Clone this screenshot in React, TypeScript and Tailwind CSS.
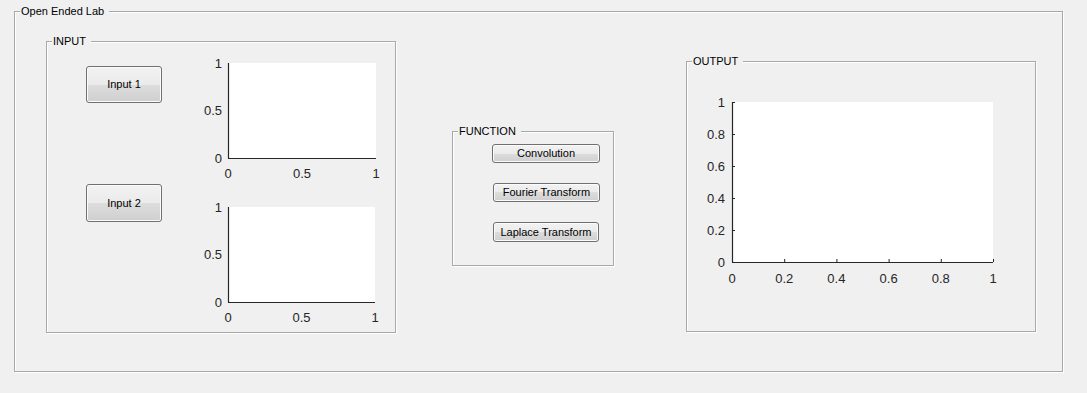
import React from 'react';

const font = { fontFamily: '"Liberation Sans", Arial, sans-serif' };

// etched group box like a MATLAB uipanel
function Panel({ title, className, children }: { title: string; className?: string; children?: React.ReactNode }) {
  return (
    <div
      className={`relative shrink-0 border border-[#a8a8a8] shadow-[1px_1px_0_#ffffff,inset_1px_1px_0_#ffffff] ${className ?? ''}`}
    >
      <span className="absolute -top-[7px] left-[5px] bg-[#f0f0f0] pl-[1px] pr-[5px] text-[11px] leading-[13px] text-black">
        {title}
      </span>
      {children}
    </div>
  );
}

function PushButton({ label, className }: { label: string; className?: string }) {
  return (
    <button
      className={`flex items-center justify-center rounded-[3px] border border-[#707070] bg-[linear-gradient(#f2f2f2_0%,#ebebeb_50%,#dddddd_50%,#cfcfcf_100%)] text-[11px] leading-none text-black shadow-[inset_0_0_0_1px_#fbfbfb] ${className ?? ''}`}
    >
      {label}
    </button>
  );
}

type AxesProps = {
  w: number;
  h: number;
  ticks: string[];
  ml: number;
  gap: number;
  labelDy: number;
  showTicks?: boolean;
};

// plain MATLAB axes: white box, left and bottom rulers, tick labels
function Axes({ w, h, ticks, ml, gap, labelDy, showTicks }: AxesProps) {
  const mt = 8;
  const mb = 26;
  const mr = 10;
  const n = ticks.length - 1;
  return (
    <svg width={ml + w + mr} height={mt + h + mb} className="block" style={font}>
      <rect x={ml} y={mt} width={w} height={h} fill="#ffffff" />
      <line x1={ml + 0.5} y1={mt} x2={ml + 0.5} y2={mt + h + 0.5} stroke="#262626" strokeWidth={1.2} />
      <line x1={ml} y1={mt + h + 0.5} x2={ml + w} y2={mt + h + 0.5} stroke="#262626" strokeWidth={1.2} />
      {ticks.map((t, i) => {
        const x = ml + (w * i) / n;
        const y = mt + h - (h * i) / n;
        return (
          <g key={t + i}>
            {showTicks && (
              <>
                <line x1={x + 0.5} y1={mt + h} x2={x + 0.5} y2={mt + h - 3} stroke="#262626" />
                <line x1={ml} y1={y + 0.5} x2={ml + 3} y2={y + 0.5} stroke="#262626" />
              </>
            )}
            <text x={ml - gap} y={y} textAnchor="end" dominantBaseline="central" fontSize={13} fill="#262626">
              {t}
            </text>
            <text x={x} y={mt + h + labelDy} textAnchor="middle" dominantBaseline="central" fontSize={13} fill="#262626">
              {t}
            </text>
          </g>
        );
      })}
    </svg>
  );
}

export default function App() {
  return (
    <div className="h-[393px] w-[1087px] overflow-hidden bg-[#f0f0f0] pl-[14px] pt-[11px]" style={font}>
      <Panel title="Open Ended Lab" className="h-[361px] w-[1049px]">
        <div className="flex items-start pl-[31px] pt-[29px]">
          {/* INPUT */}
          <Panel title="INPUT" className="h-[292px] w-[350px]">
            <div className="flex">
              <div className="flex flex-col gap-[81px] pl-[39px] pt-[24px]">
                <PushButton label="Input 1" className="h-[37px] w-[76px] text-[10.5px]" />
                <PushButton label="Input 2" className="h-[38px] w-[76px] text-[10.5px]" />
              </div>
              <div className="ml-[36px] flex flex-col gap-[15px] pt-[13px]">
                <Axes w={148} h={95} ticks={['0', '0.5', '1']} ml={30} gap={6} labelDy={15} />
                <Axes w={147} h={95} ticks={['0', '0.5', '1']} ml={30} gap={6} labelDy={15} />
              </div>
            </div>
          </Panel>

          {/* FUNCTION */}
          <Panel title="FUNCTION" className="ml-[56px] mt-[90px] h-[135px] w-[162px]">
            <div className="flex flex-col items-start gap-[20px] pl-[39px] pt-[12px]">
              <PushButton label="Convolution" className="h-[19px] w-[108px]" />
              <PushButton label="Fourier Transform" className="ml-[1px] h-[19px] w-[107px]" />
              <PushButton label="Laplace Transform" className="ml-[1px] h-[20px] w-[106px]" />
            </div>
          </Panel>

          {/* OUTPUT */}
          <Panel title="OUTPUT" className="ml-[72px] mt-[20px] h-[271px] w-[350px]">
            <div className="pl-[9px] pt-[32px]">
              <Axes
                w={261}
                h={160}
                ticks={['0', '0.2', '0.4', '0.6', '0.8', '1']}
                ml={36}
                gap={7}
                labelDy={16}
                showTicks
              />
            </div>
          </Panel>
        </div>
      </Panel>
    </div>
  );
}
